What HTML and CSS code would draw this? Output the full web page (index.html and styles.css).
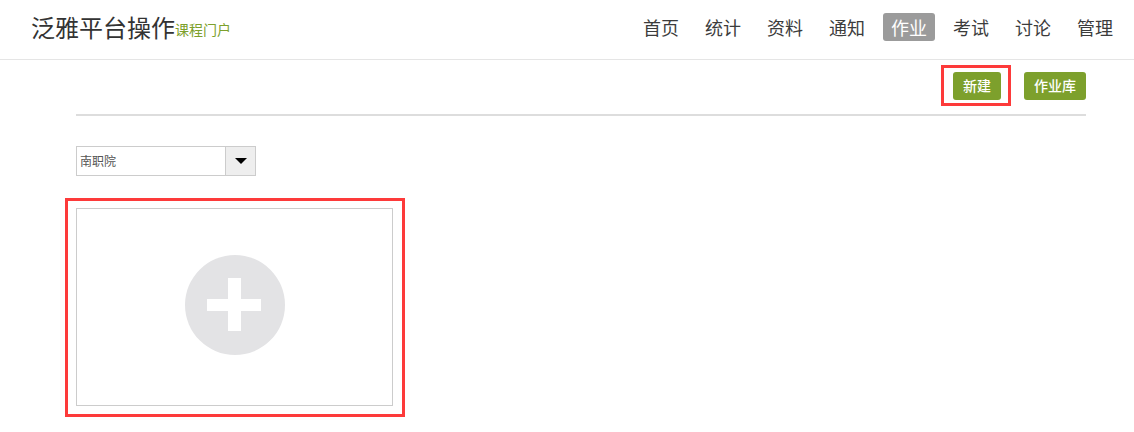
FILE: index.html
```html
<!DOCTYPE html>
<html lang="zh-CN">
<head>
    <title>作业</title>
    <meta charset="utf-8">
    <meta name="viewport" content="width=device-width, initial-scale=1.0">
    <link rel="stylesheet" href="styles.css">
</head>
<body>

    <header class="header">
        <div class="brand">
            <span class="brand-name">泛雅平台操作</span>
            <span class="brand-sub">课程门户</span>
        </div>
        <nav class="nav">
            <a class="nav-item">首页</a>
            <a class="nav-item">统计</a>
            <a class="nav-item">资料</a>
            <a class="nav-item">通知</a>
            <a class="nav-item active">作业</a>
            <a class="nav-item">考试</a>
            <a class="nav-item">讨论</a>
            <a class="nav-item">管理</a>
        </nav>
    </header>

    <main class="content">
        <div class="toolbar">
            <a class="button marked">新建</a>
            <a class="button">作业库</a>
        </div>

        <div class="select">
            <span class="select-value">南职院</span>
            <span class="select-arrow"></span>
        </div>

        <div class="add-card marked-large">
            <svg class="add-icon" width="100" height="100" viewBox="0 0 100 100">
                <circle cx="50" cy="50" r="50" fill="#e3e3e5"/>
                <rect x="22" y="44" width="54" height="12" fill="#fff"/>
                <rect x="43" y="23" width="13" height="53" fill="#fff"/>
            </svg>
        </div>
    </main>

</body>
</html>
```

FILE: styles.css
```css
body {
    margin: 0;
    background: #fff;
    font-family: "Noto Sans CJK SC", "Liberation Sans", sans-serif;
}

.header {
    display: flex;
    justify-content: space-between;
    align-items: center;
    height: 54px;
    padding: 0 13px 5px 31px;
    border-bottom: 1px solid #e5e5e5;
}

.brand {
    display: flex;
    align-items: center;
}

.brand-name {
    font-size: 24px;
    line-height: 28px;
    color: #333;
}

.brand-sub {
    padding-top: 4px;
    font-size: 14px;
    line-height: 20px;
    color: #7da02c;
}

.nav {
    display: flex;
    gap: 10px;
}

.nav-item {
    height: 28px;
    padding: 0 8px;
    border-radius: 3px;
    font-size: 18px;
    line-height: 28px;
    color: #3c3c3c;
}

.nav-item.active {
    background: #9b9b9b;
    color: #fff;
}

.content {
    margin: 0 48px 0 76px;
    padding-bottom: 26px;
}

.toolbar {
    display: flex;
    justify-content: flex-end;
    gap: 23px;
    padding: 12px 0 14px;
    border-bottom: 2px solid #ddd;
}

.button {
    height: 28px;
    padding: 0 10px;
    border-radius: 3px;
    background: #7da02c;
    font-size: 14px;
    font-weight: 500;
    line-height: 27px;
    color: #fff;
}

.marked,
.marked-large {
    position: relative;
}

.marked::after,
.marked-large::after {
    content: "";
    position: absolute;
    border: 3px solid #fd3a3a;
}

.marked::after {
    top: -7px;
    right: -10px;
    bottom: -6px;
    left: -12px;
}

.marked-large::after {
    top: -11px;
    right: -13px;
    bottom: -12px;
    left: -12px;
}

.select {
    display: flex;
    box-sizing: border-box;
    width: 180px;
    height: 30px;
    margin-top: 30px;
    border: 1px solid #ccc;
}

.select-value {
    flex: 1;
    padding-left: 3px;
    font-size: 12px;
    line-height: 28px;
    color: #555;
}

.select-arrow {
    display: flex;
    justify-content: center;
    align-items: center;
    width: 29px;
    border-left: 1px solid #ccc;
    background: #eee;
}

.select-arrow::before {
    content: "";
    border-top: 6px solid #000;
    border-left: 6px solid transparent;
    border-right: 6px solid transparent;
}

.add-card {
    display: flex;
    justify-content: center;
    box-sizing: border-box;
    width: 317px;
    height: 198px;
    margin-top: 32px;
    padding-top: 46px;
    border: 1px solid #ccc;
}
```
